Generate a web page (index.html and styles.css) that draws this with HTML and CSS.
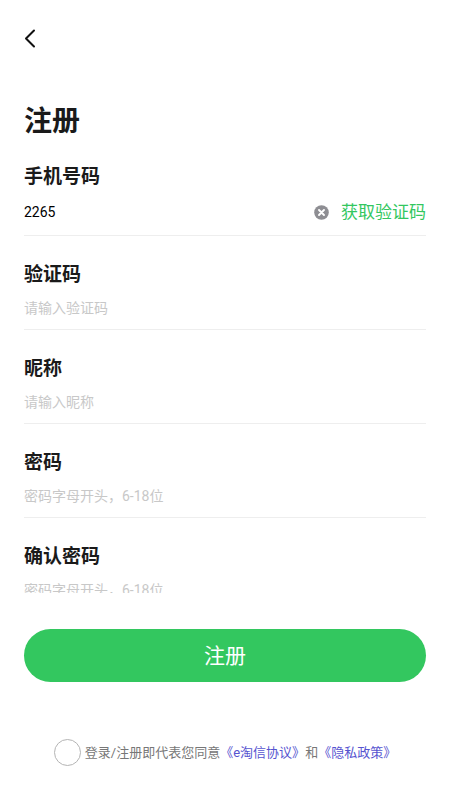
FILE: index.html
```html
<!DOCTYPE html>
<html lang="zh-CN">
<head>
<meta charset="utf-8">
<meta name="viewport" content="width=device-width, initial-scale=1">
<title>注册</title>
<link rel="stylesheet" href="styles.css">
</head>
<body>
<header class="topbar">
  <button class="back" type="button" aria-label="返回">
    <svg width="12" height="20" viewBox="0 0 12 20" fill="none" stroke="#111" stroke-width="2" stroke-linecap="round" stroke-linejoin="round"><path d="M10 2.500 2 10.500l8 8"/></svg>
  </button>
</header>
<form class="signup">
  <h1 class="title">注册</h1>
  <div class="fields">
    <div class="field field-phone">
      <label for="phone">手机号码</label>
      <div class="row">
        <input id="phone" type="tel" value="2265">
        <button class="clear" type="button" aria-label="清除">
          <svg width="15" height="15" viewBox="0 0 15 15"><circle cx="7.500" cy="7.500" r="7.300" fill="#8e8e93"/><path d="m5 5 5 5m0-5-5 5" stroke="#fff" stroke-width="1.900" stroke-linecap="round"/></svg>
        </button>
        <button class="code" type="button">获取验证码</button>
      </div>
    </div>
    <div class="field">
      <label for="code">验证码</label>
      <div class="row"><input id="code" type="text" placeholder="请输入验证码"></div>
    </div>
    <div class="field">
      <label for="nick">昵称</label>
      <div class="row"><input id="nick" type="text" placeholder="请输入昵称"></div>
    </div>
    <div class="field">
      <label for="pass">密码</label>
      <div class="row"><input id="pass" type="password" placeholder="密码字母开头，6-18位"></div>
    </div>
    <div class="field">
      <label for="confirm">确认密码</label>
      <div class="row"><input id="confirm" type="password" placeholder="密码字母开头，6-18位"></div>
    </div>
  </div>
  <button class="submit" type="submit">注册</button>
  <div class="agree">
    <input id="agree" type="checkbox">
    <p><label for="agree">登录/注册即代表您同意</label><a href="#terms">《e淘信协议》</a>和<a href="#privacy">《隐私政策》</a></p>
  </div>
</form>
</body>
</html>
```

FILE: styles.css
```css
* {
  box-sizing: border-box;
}

body {
  margin: 0;
  height: 100vh;
  display: flex;
  flex-direction: column;
  background: #fff;
  color: #1a1a1a;
  font-family: Roboto, "Noto Sans CJK SC", sans-serif;
}

button,
input {
  font: inherit;
  margin: 0;
  padding: 0;
  border: 0;
  background: none;
}

.topbar {
  padding: 28px 24px 0;
}

.back,
.clear {
  display: flex;
}

.signup {
  flex: 1;
  min-height: 0;
  display: flex;
  flex-direction: column;
  padding: 54px 24px 34px;
}

.title {
  margin: 0;
  font-size: 28px;
  line-height: 40px;
  font-weight: 700;
}

.fields {
  flex: 1 1 0;
  min-height: 0;
  margin-top: 6px;
  overflow: hidden;
}

.field {
  padding-top: 26px;
  border-bottom: 1px solid #eee;
}

.field-phone {
  padding-top: 16px;
}

.field label {
  display: block;
  font-size: 19px;
  line-height: 26px;
  font-weight: 700;
}

.row {
  display: flex;
  align-items: center;
  height: 41px;
  padding-bottom: 1px;
}

.field-phone .row {
  height: 45px;
}

.row input {
  flex: 1;
  min-width: 0;
  height: 24px;
  font-size: 14px;
  line-height: 24px;
  color: #000;
  outline: none;
}

.row input::placeholder {
  color: #c8c8c8;
  opacity: 1;
}

.code {
  margin-left: 12px;
  font-size: 17px;
  line-height: 24px;
  color: #33c75f;
}

.submit {
  flex: none;
  height: 53px;
  margin-top: 36px;
  border-radius: 27px;
  background: #33c75f;
  color: #fff;
  font-size: 21px;
  line-height: 30px;
}

.agree {
  display: flex;
  align-items: center;
  justify-content: center;
  gap: 4px;
  margin-top: 57px;
  font-size: 13px;
  line-height: 20px;
  color: #777;
}

.agree input {
  appearance: none;
  width: 27px;
  height: 27px;
  border: 1px solid #b4b4b4;
  border-radius: 50%;
}

.agree p {
  margin: 0;
}

.agree a {
  color: #5654d0;
  text-decoration: none;
}
```
